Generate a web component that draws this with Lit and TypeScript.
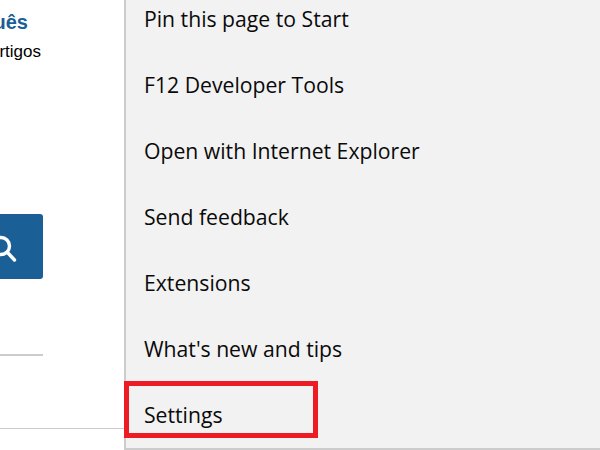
import { css, html, LitElement } from 'lit'
import { customElement } from 'lit/decorators.js'

const MENU_ITEMS = [
  'Pin this page to Start',
  'F12 Developer Tools',
  'Open with Internet Explorer',
  'Send feedback',
  'Extensions',
  "What's new and tips",
  'Settings',
]

@customElement('app-root')
export class AppRoot extends LitElement {
  static styles = css`
    :host {
      display: block;
      width: 600px;
      height: 450px;
      overflow: hidden;
      background: #fff;
    }

    .window {
      position: relative;
      display: flex;
      height: 450px;
    }

    .page {
      width: 124px;
      flex: none;
      overflow: hidden;
      display: flex;
      flex-direction: column;
      font-family: 'Liberation Sans', Arial, sans-serif;
    }

    .lang {
      width: 43px;
      display: flex;
      flex-direction: column;
      align-items: flex-end;
      white-space: nowrap;
    }

    .lang-name {
      margin: 11px 15px 0 0;
      height: 23px;
      font-size: 20px;
      line-height: 23px;
      font-weight: 700;
      color: #1a5f96;
    }

    .lang-count {
      margin: 9px 2px 0 0;
      height: 18px;
      font-size: 17px;
      line-height: 18px;
      color: #000;
    }

    .search {
      margin-top: 153px;
      width: 43px;
      height: 65px;
      flex: none;
      background: #1a5f96;
      border-radius: 0 3px 3px 0;
      overflow: hidden;
    }

    .search svg {
      display: block;
    }

    .rule {
      margin-top: 75px;
      width: 43px;
      height: 2px;
      background: #cccccc;
      flex: none;
    }

    .footer-rule {
      margin-top: 72px;
      height: 1px;
      background: #cccccc;
      flex: none;
    }

    .menu {
      flex: 1;
      box-sizing: border-box;
      height: 450px;
      margin: 0;
      padding: 0 0 0 18px;
      background: #f2f2f2;
      border-left: 2px solid #cccccc;
      border-bottom: 2px solid #cccccc;
      overflow: hidden;
      list-style: none;
      font-family: 'Open Sans', 'Noto Sans', sans-serif;
      font-size: 21.2px;
      color: #0a0a0a;
    }

    .menu li {
      height: 66px;
      line-height: 66px;
      white-space: nowrap;
    }

    .menu li:first-child {
      margin-top: -14px;
    }

    .highlight {
      position: absolute;
      left: 124px;
      top: 381px;
      width: 194px;
      height: 57px;
      box-sizing: border-box;
      border: 5px solid #ed1c24;
    }
  `

  render() {
    return html`
      <div class="window">
        <div class="page">
          <div class="lang">
            <span class="lang-name">Português</span>
            <span class="lang-count">1 000 000+ artigos</span>
          </div>
          <div class="search">
            <svg width="43" height="65" viewBox="0 0 43 65" fill="none" stroke="#fff" stroke-width="3.4" stroke-linecap="round">
              <circle cx="1" cy="32" r="8.5"></circle>
              <path d="M8 39l6.5 7"></path>
            </svg>
          </div>
          <div class="rule"></div>
          <div class="footer-rule"></div>
        </div>
        <ul class="menu">
          ${MENU_ITEMS.map((item) => html`<li>${item}</li>`)}
        </ul>
        <div class="highlight"></div>
      </div>
    `
  }
}
